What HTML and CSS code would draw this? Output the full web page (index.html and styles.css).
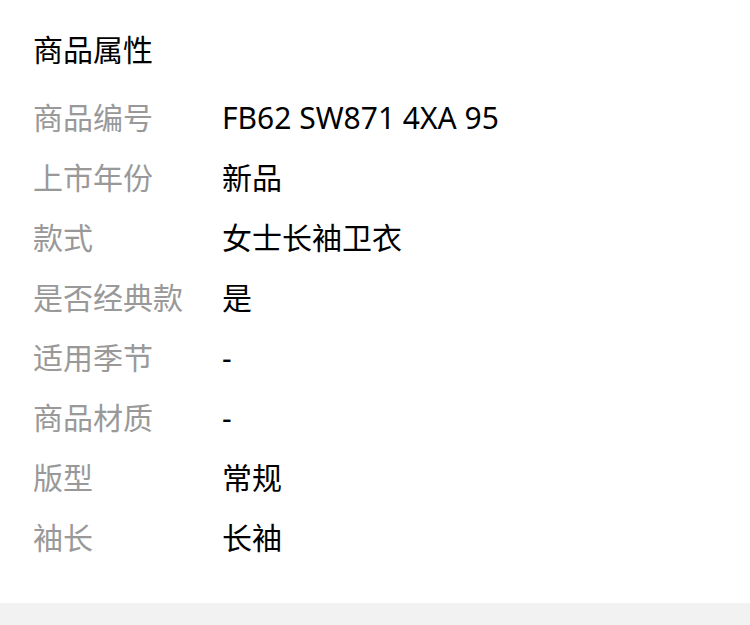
FILE: index.html
```html
<!DOCTYPE html>
<html lang="zh">
<head>
<meta charset="utf-8">
<link rel="stylesheet" href="styles.css">
</head>
<body>
<section class="attrs">
  <h2 class="title">商品属性</h2>
  <div class="row"><span class="label">商品编号</span><span class="value">FB62 SW871 4XA 95</span></div>
  <div class="row"><span class="label">上市年份</span><span class="value">新品</span></div>
  <div class="row"><span class="label">款式</span><span class="value">女士长袖卫衣</span></div>
  <div class="row"><span class="label">是否经典款</span><span class="value">是</span></div>
  <div class="row"><span class="label">适用季节</span><span class="value">-</span></div>
  <div class="row"><span class="label">商品材质</span><span class="value">-</span></div>
  <div class="row"><span class="label">版型</span><span class="value">常规</span></div>
  <div class="row"><span class="label">袖长</span><span class="value">长袖</span></div>
</section>
<div class="band"></div>
</body>
</html>
```
FILE: styles.css
```css
html, body {
  margin: 0;
  padding: 0;
  background: #fff;
}
body {
  font-family: "Noto Sans", "Noto Sans CJK SC", sans-serif;
  font-size: 30px;
  color: #000;
}
.attrs {
  padding: 20px 0 35px 33px;
}
.title {
  margin: 0 0 8px 0;
  font-size: 30px;
  font-weight: 400;
  line-height: 60px;
  color: #000;
}
.row {
  display: flex;
  line-height: 60px;
  height: 60px;
}
.label {
  width: 189px;
  flex: none;
  color: #999;
}
.value {
  color: #000;
}
.band {
  height: 40px;
  background: #f2f2f2;
}
```
